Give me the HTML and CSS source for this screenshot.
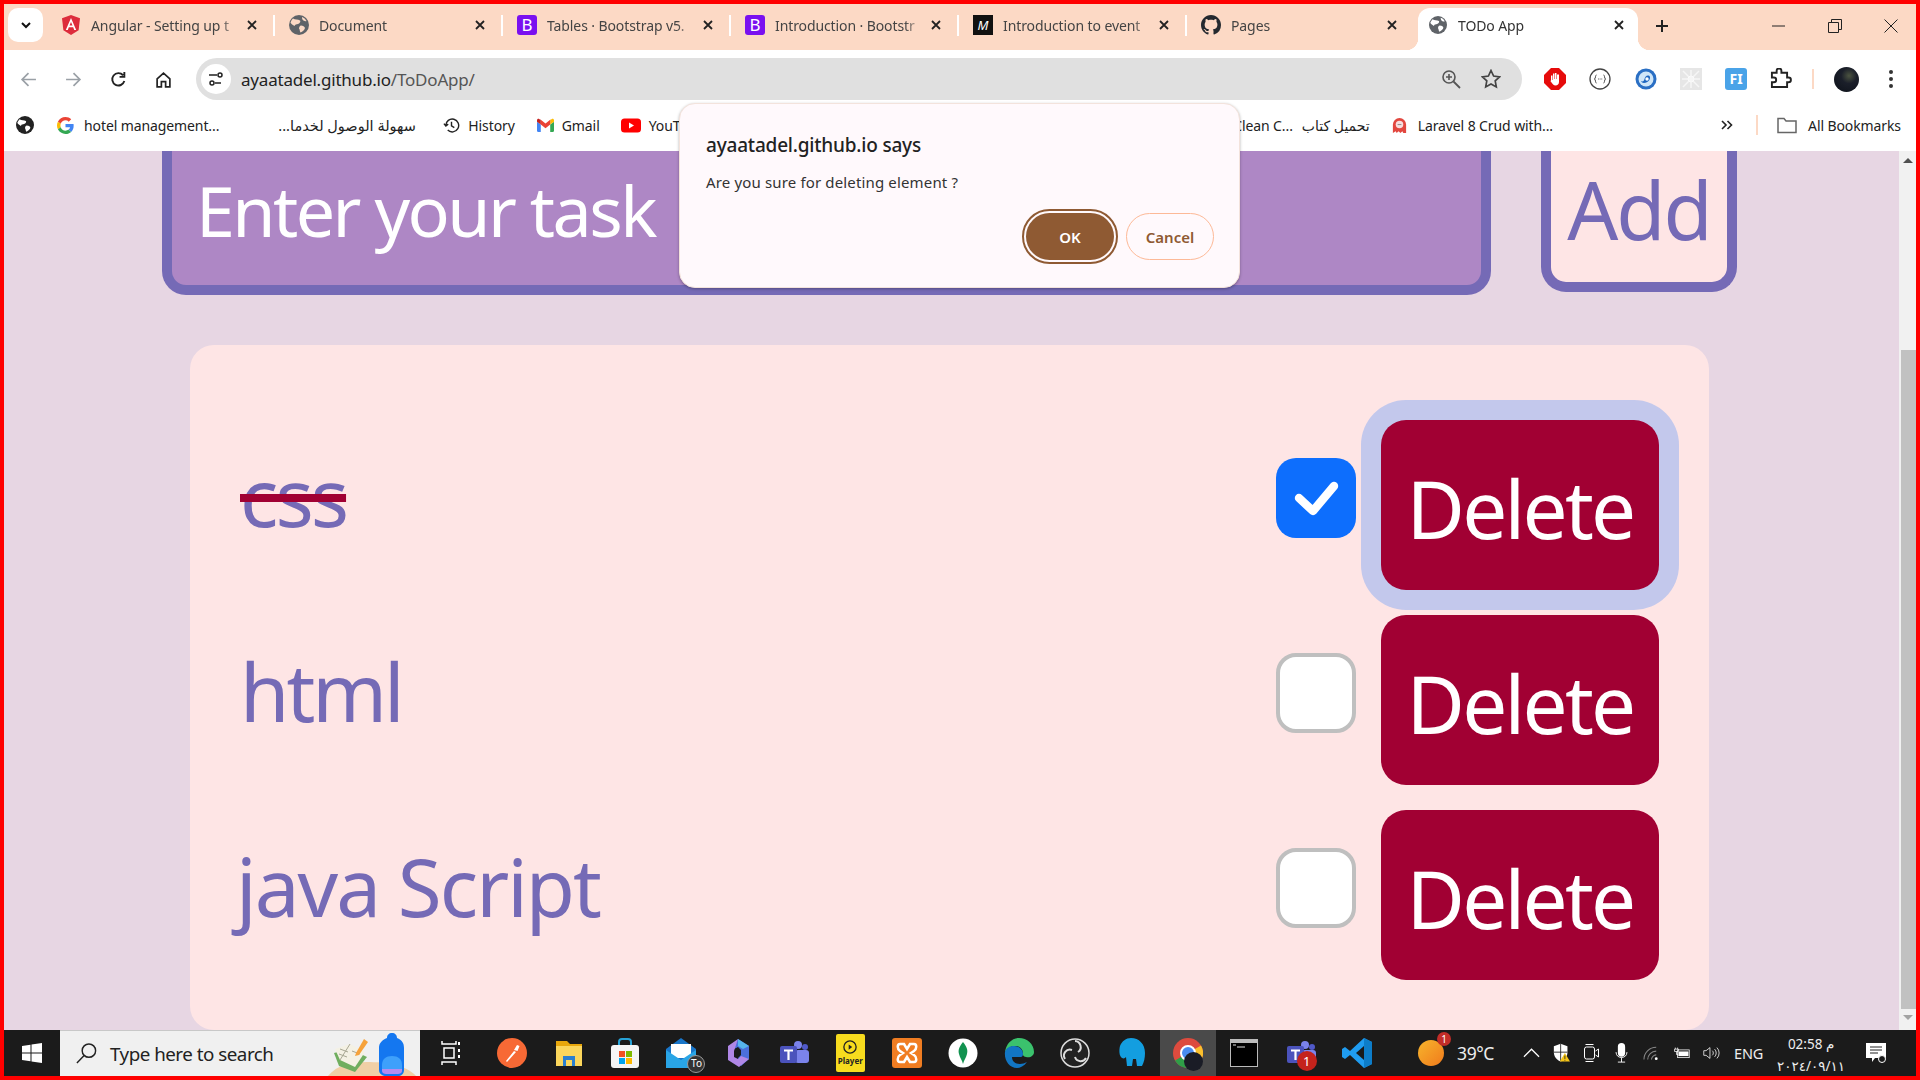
FILE: index.html
```html
<!DOCTYPE html>
<html lang="en">
<head>
    <meta charset="UTF-8">
    <title>TODo App</title>
    <link rel="stylesheet" href="styles.css">
</head>
<body>
<div class="screen">

    <!-- tabs -->
    <div class="tabstrip">
        <button class="tab-search"><svg width="14" height="14" viewBox="0 0 14 14"><path d="M3 5l4 4 4-4" fill="none" stroke="#111" stroke-width="2"/></svg></button>
        <div class="tab">
            <svg class="fav" viewBox="0 0 20 20"><path d="M10 0L1 3.200l1.400 12L10 20l7.600-4.800 1.400-12z" fill="#dd2c3c"/><path d="M10 3L4.800 15h2l1-2.700h4.400l1 2.700h2zM8.500 10.500L10 7l1.500 3.500z" fill="#fff"/></svg>
            <span class="tab-title">Angular - Setting up t</span>
            <svg class="x" viewBox="0 0 12 12"><path d="M2 2l8 8M10 2l-8 8"/></svg>
        </div>
        <i class="tab-sep"></i>
        <div class="tab">
            <svg class="fav" viewBox="0 0 20 20"><circle cx="10" cy="10" r="10" fill="#5f6368"/><path d="M4 3.500C6 5 9 4 11 5.500c1 1-.5 3-2 3.500s-3 0-3.500 2C4 10 2 9 1.500 7.500 2 6 3 4.500 4 3.500zM12 10.500c2 0 3.500 1 4 2.500-.5 2-2.500 3.500-4.500 4.500-1-1.500-.5-3-1.500-4 0-1.500 1-3 2-3zM13 2c2 .7 3.500 2 4.500 4-1 .5-3 0-4-1.500-.5-1-.5-2-.5-2.500z" fill="#fcd9c5"/></svg>
            <span class="tab-title">Document</span>
            <svg class="x" viewBox="0 0 12 12"><path d="M2 2l8 8M10 2l-8 8"/></svg>
        </div>
        <i class="tab-sep"></i>
        <div class="tab">
            <span class="fav fav-b">B</span>
            <span class="tab-title">Tables · Bootstrap v5.</span>
            <svg class="x" viewBox="0 0 12 12"><path d="M2 2l8 8M10 2l-8 8"/></svg>
        </div>
        <i class="tab-sep"></i>
        <div class="tab">
            <span class="fav fav-b">B</span>
            <span class="tab-title">Introduction · Bootstr</span>
            <svg class="x" viewBox="0 0 12 12"><path d="M2 2l8 8M10 2l-8 8"/></svg>
        </div>
        <i class="tab-sep"></i>
        <div class="tab">
            <span class="fav fav-m">M</span>
            <span class="tab-title">Introduction to event</span>
            <svg class="x" viewBox="0 0 12 12"><path d="M2 2l8 8M10 2l-8 8"/></svg>
        </div>
        <i class="tab-sep"></i>
        <div class="tab">
            <svg class="fav" viewBox="0 0 16 16"><path fill="#24292f" d="M8 0C3.580 0 0 3.580 0 8c0 3.540 2.290 6.530 5.470 7.590.4.070.55-.17.55-.38 0-.19-.01-.82-.01-1.490-2.010.37-2.530-.49-2.690-.94-.09-.23-.48-.94-.82-1.130-.28-.15-.68-.52-.01-.53.63-.01 1.080.58 1.230.82.72 1.210 1.870.87 2.330.66.07-.52.28-.87.51-1.070-1.780-.2-3.640-.89-3.640-3.950 0-.87.31-1.590.82-2.150-.08-.2-.36-1.020.08-2.120 0 0 .67-.21 2.200.82.64-.18 1.320-.27 2-.27s1.360.09 2 .27c1.530-1.040 2.200-.82 2.200-.82.44 1.100.16 1.920.08 2.120.51.56.82 1.270.82 2.150 0 3.070-1.870 3.750-3.650 3.950.29.25.54.73.54 1.480 0 1.070-.01 1.930-.01 2.200 0 .21.15.46.55.38A8.010 8.010 0 0 0 16 8c0-4.420-3.580-8-8-8z"/></svg>
            <span class="tab-title">Pages</span>
            <svg class="x" viewBox="0 0 12 12"><path d="M2 2l8 8M10 2l-8 8"/></svg>
        </div>
        <div class="tab tab-active">
            <svg class="fav" viewBox="0 0 20 20"><circle cx="10" cy="10" r="10" fill="#5f6368"/><path d="M4 3.500C6 5 9 4 11 5.500c1 1-.5 3-2 3.500s-3 0-3.500 2C4 10 2 9 1.500 7.500 2 6 3 4.500 4 3.500zM12 10.500c2 0 3.500 1 4 2.500-.5 2-2.500 3.500-4.500 4.500-1-1.500-.5-3-1.500-4 0-1.500 1-3 2-3zM13 2c2 .7 3.500 2 4.500 4-1 .5-3 0-4-1.500-.5-1-.5-2-.5-2.500z" fill="#fff"/></svg>
            <span class="tab-title">TODo App</span>
            <svg class="x" viewBox="0 0 12 12"><path d="M2 2l8 8M10 2l-8 8"/></svg>
        </div>
        <svg class="new-tab" viewBox="0 0 14 14"><path d="M7 1v12M1 7h12" fill="none" stroke="#222" stroke-width="2"/></svg>
        <div class="win-btns">
            <svg viewBox="0 0 14 14" width="14" height="14"><path d="M0 7h13" stroke="#222" fill="none"/></svg>
            <svg viewBox="0 0 14 14" width="14" height="14"><path d="M.5 3.500h10v10H.5zM3.500 3.500v-3h10v10h-3" stroke="#222" fill="none"/></svg>
            <svg viewBox="0 0 14 14" width="14" height="14"><path d="M.5.500l13 13M13.500.500l-13 13" stroke="#222" fill="none"/></svg>
        </div>
    </div>

    <!-- toolbar -->
    <div class="toolbar">
        <div class="nav-btns">
            <svg viewBox="0 0 16 16"><path d="M15 8H2M8 2L2 8l6 6" fill="none" stroke="#9aa0a6" stroke-width="1.600"/></svg>
            <svg viewBox="0 0 16 16"><path d="M1 8h13M8 2l6 6-6 6" fill="none" stroke="#9aa0a6" stroke-width="1.600"/></svg>
            <svg viewBox="0 0 16 16"><path d="M13.500 9.500A5.800 5.800 0 1 1 12.300 4M13.500 1v4.500H9" fill="none" stroke="#222" stroke-width="1.800"/></svg>
            <svg viewBox="0 0 16 16"><path d="M2 7.500L8 2l6 5.500V15h-4v-5H6v5H2z" fill="none" stroke="#222" stroke-width="1.600"/></svg>
        </div>
        <div class="omnibox">
            <span class="site-btn"><svg viewBox="0 0 16 16" width="16" height="16"><path d="M1 4h8M13 12H7" stroke="#222" stroke-width="1.500" fill="none"/><circle cx="12" cy="4" r="2" fill="none" stroke="#222" stroke-width="1.500"/><circle cx="4" cy="12" r="2" fill="none" stroke="#222" stroke-width="1.500"/></svg></span>
            <span class="url">ayaatadel.github.io<span class="url-path">/ToDoApp/</span></span>
            <svg class="omni-icon" viewBox="0 0 20 20"><circle cx="8" cy="8" r="6" fill="none" stroke="#555" stroke-width="1.600"/><path d="M12.500 12.500L19 19" stroke="#555" stroke-width="1.800"/><path d="M8 5v6M5 8h6" stroke="#555" stroke-width="1.600"/></svg>
            <svg class="omni-icon" viewBox="0 0 20 20"><path d="M10 1.500l2.600 5.500 6 .8-4.400 4.100 1.100 6L10 15l-5.300 2.900 1.100-6L1.400 7.800l6-.8z" fill="none" stroke="#444" stroke-width="1.700"/></svg>
        </div>
        <div class="ext-btns">
            <svg viewBox="0 0 22 22"><path d="M7 0h8l7 7v8l-7 7H7l-7-7V7z" fill="#e60b0b"/><path d="M7 13V7.500h1.500V12h.5V5.500h1.500V11h.5V5h1.500v6h.5V6.500H15V14c0 2-1.500 3.500-3.500 3.500S8.500 16 7.500 14.500L6 12.500z" fill="#fff"/></svg>
            <svg viewBox="0 0 22 22"><circle cx="11" cy="11" r="10" fill="#fff" stroke="#444" stroke-width="1.300"/><path d="M7.500 7c-1.500 0-.5 3-2 4 1.500 1 .5 4 2 4M14.500 7c1.500 0 .5 3 2 4-1.500 1-.5 4-2 4" fill="none" stroke="#444"/><path d="M9 11h.8M10.700 11h.8M12.400 11h.8" stroke="#444"/></svg>
            <svg viewBox="0 0 22 22"><circle cx="11" cy="11" r="10.500" fill="#2a6fc4"/><circle cx="11" cy="11" r="7.500" fill="#cfe6f8"/><path d="M6 13c2 1 3 0 3.500-2s2-4 4-3.500c2 .5 2 3 .5 5-1.200 1.600-3 2.500-5 2.500-1.500 0-2.500-1-3-2z" fill="#1d66c0"/><circle cx="12" cy="11" r="1.700" fill="#fff"/></svg>
            <svg viewBox="0 0 22 22"><rect width="22" height="22" fill="#e6e6e6"/><path d="M3 3l16 16M19 3L3 19M11 2v18M2 11h18" stroke="#f6f6f6" stroke-width="1.500"/><circle cx="11" cy="11" r="3" fill="none" stroke="#fbfbfb"/></svg>
            <span class="ext-fi">FI</span>
            <svg viewBox="0 0 22 22"><path d="M2 5h5V3a2.500 2.500 0 0 1 5 0v2h6v5h1.500a2.500 2.500 0 0 1 0 5H18v5H2v-5h2a2.500 2.500 0 0 0 0-5H2z" transform="scale(.95)" fill="none" stroke="#222" stroke-width="2"/></svg>
        </div>
        <i class="bar-sep"></i>
        <span class="avatar"></span>
        <svg class="menu-dots" viewBox="0 0 4 18"><circle cx="2" cy="2" r="2" fill="#333"/><circle cx="2" cy="9" r="2" fill="#333"/><circle cx="2" cy="16" r="2" fill="#333"/></svg>
    </div>

    <!-- bookmarks -->
    <div class="bookmarks">
        <svg class="bm-globe" viewBox="0 0 20 20"><circle cx="10" cy="10" r="10" fill="#222"/><path d="M4 3.500C6 5 9 4 11 5.500c1 1-.5 3-2 3.500s-3 0-3.500 2C4 10 2 9 1.500 7.500 2 6 3 4.500 4 3.500zM12 10.500c2 0 3.500 1 4 2.500-.5 2-2.500 3.500-4.500 4.500-1-1.500-.5-3-1.500-4 0-1.500 1-3 2-3z" fill="#fff"/></svg>
        <div class="bm bm-hotel">
            <svg class="bm-icon" viewBox="0 0 48 48"><path fill="#EA4335" d="M24 9.500c3.500 0 6.700 1.200 9.200 3.600l6.900-6.900C35.900 2.400 30.500 0 24 0 14.600 0 6.500 5.400 2.600 13.200l8 6.200C12.500 13.700 17.800 9.500 24 9.500z"/><path fill="#4285F4" d="M47 24.500c0-1.600-.1-3.100-.4-4.500H24v9h12.900c-.6 3-2.200 5.500-4.700 7.200l7.700 6C44.400 38.100 47 31.900 47 24.500z"/><path fill="#FBBC05" d="M10.500 28.600c-.5-1.400-.8-3-.8-4.600s.3-3.200.8-4.600l-8-6.200C.9 16.500 0 20.100 0 24s.9 7.500 2.600 10.800z"/><path fill="#34A853" d="M24 48c6.500 0 11.900-2.100 15.900-5.800l-7.700-6c-2.200 1.500-4.900 2.300-8.200 2.300-6.300 0-11.500-4.200-13.400-9.900l-8 6.200C6.500 42.600 14.600 48 24 48z"/></svg>
            <span>hotel management...</span>
        </div>
        <div class="bm bm-arabic"><span dir="rtl">سهولة الوصول لخدما...</span></div>
        <div class="bm bm-history">
            <svg class="bm-icon" viewBox="0 0 18 18"><path d="M3 9a6.800 6.800 0 1 1 2 4.800M1 7l2 2.500L5.500 7.500M9 5v4.500l3 1.800" fill="none" stroke="#222" stroke-width="1.500"/></svg>
            <span>History</span>
        </div>
        <div class="bm bm-gmail">
            <svg class="bm-icon" viewBox="0 0 18 14"><path d="M0 3v9.500A1.500 1.500 0 0 0 1.500 14H4V6z" fill="#4285F4"/><path d="M14 14h2.500a1.500 1.500 0 0 0 1.500-1.500V3l-4 3z" fill="#34A853"/><path d="M14 1v5l4-3V1.500C18 .2 16.500-.5 15.500.3z" fill="#FBBC05"/><path d="M4 6V1l5 3.800L14 1v5L9 9.800z" fill="#EA4335"/><path d="M0 1.500V3l4 3V1L2.500.3C1.500-.5 0 .2 0 1.500z" fill="#C5221F"/></svg>
            <span>Gmail</span>
        </div>
        <div class="bm bm-yt">
            <svg class="bm-icon yt-icon" viewBox="0 0 20 14"><rect width="20" height="14" rx="3.500" fill="#f00"/><path d="M8 4l5 3-5 3z" fill="#fff"/></svg>
            <span>YouTube</span>
        </div>
        <div class="bm bm-clean"><span>Clean C...</span> <span dir="rtl">تحميل كتاب</span></div>
        <div class="bm bm-laravel">
            <svg class="bm-icon" viewBox="0 0 16 18"><path d="M1 17V8a7 7 0 0 1 14 0v9h-3l-1-2-2 2-2-2-2 2-1-2z" fill="#e2473f"/><circle cx="8" cy="8" r="4" fill="#f8dede"/><path d="M6 8h4" stroke="#888"/></svg>
            <span>Laravel 8 Crud with...</span>
        </div>
        <svg class="bm-more" viewBox="0 0 12 10"><path d="M1 1l4 4-4 4M6.500 1l4 4-4 4" fill="none" stroke="#222" stroke-width="1.600"/></svg>
        <i class="bar-sep bm-sep"></i>
        <div class="bm bm-all">
            <svg class="bm-icon" viewBox="0 0 20 16"><path d="M1 1h6l2 2.500h10V15H1z" fill="none" stroke="#666" stroke-width="1.500"/></svg>
            <span>All Bookmarks</span>
        </div>
    </div>

    <!-- page -->
    <div class="viewport">
        <main class="page">
            <div class="add-row">
                <div class="task-input">Enter your task</div>
                <button class="add-btn">Add</button>
            </div>
            <div class="task-card">
                <div class="task-row">
                    <span class="task-text task-done">css</span>
                    <span class="check check-on"><svg viewBox="0 0 40 40" width="80" height="80"><path d="M11.500 20l7 6.500L29 14" fill="none" stroke="#fff" stroke-width="4.200" stroke-linecap="round" stroke-linejoin="round"/></svg></span>
                    <button class="del-btn del-focus">Delete</button>
                </div>
                <div class="task-row">
                    <span class="task-text">html</span>
                    <span class="check"></span>
                    <button class="del-btn">Delete</button>
                </div>
                <div class="task-row">
                    <span class="task-text task-long">java Script</span>
                    <span class="check"></span>
                    <button class="del-btn">Delete</button>
                </div>
            </div>
        </main>
        <div class="scrollbar">
            <span class="arrow-up"></span>
            <span class="thumb"></span>
            <span class="arrow-down"></span>
        </div>
    </div>

    <!-- taskbar -->
    <div class="taskbar">
        <div class="start"><svg viewBox="0 0 20 20" width="20" height="20"><path d="M0 3l8.500-1.300v7.800H0zM9.500 1.500L20 0v9.500H9.500zM0 10.500h8.500v7.800L0 17zM9.500 10.500H20V20L9.500 18.500z" fill="#fff"/></svg></div>
        <div class="search">
            <svg viewBox="0 0 24 24" width="23" height="23"><circle cx="14.500" cy="9" r="7" fill="none" stroke="#222" stroke-width="1.500"/><path d="M9.500 14L2 22" stroke="#222" stroke-width="1.500"/></svg>
            <span class="search-text">Type here to search</span>
            <span class="search-art">
                <svg viewBox="0 0 90 46" width="90" height="46"><path d="M0 46c10-12 22-15 40-15s40 3 50 15z" fill="#f0cfa6"/><path d="M7 22l16-4 17 8-12 15-16-6z" fill="#6fae5f"/><path d="M8 18l15-5 15 8-10 15-15-7z" fill="#f4f1e4"/><path d="M23 13L13 29M13 18l8 3M12 23l8 3M25 20l8 3" stroke="#a8a793"/><path d="M29 22l8-14 4 3-9 13-4 1z" fill="#f6a23a"/><path d="M60 7c0-3 2-5 5-5s5 2 5 5c5 2 7 5 7 10v22c0 4-3 6-6 6h-12c-3 0-7-2-7-6V17c0-5 3-8 8-10z" fill="#1477f0"/><path d="M55 34c0-6 4-9 10-9s10 3 10 9v5H55z" fill="#3ea0fb"/><path d="M55 38h20v2c0 2-2 3-4 3H59c-2 0-4-1-4-3z" fill="#b48cf0"/></svg>
            </span>
        </div>
        <div class="task-apps">
            <span class="app app-first"><svg viewBox="0 0 20 26"><path d="M1 1v3h14V1M1 25v-3h14v3M3 8h10v10H3z" fill="none" stroke="#fff" stroke-width="1.500"/><path d="M18 2v3M18 9v3M18 15v3" stroke="#fff" stroke-width="2"/></svg></span>
            <span class="app"><svg viewBox="0 0 30 30"><circle cx="15" cy="15" r="15" fill="#f76935"/><path d="M9 23l8-10 2 1-9 10zM17 12l3-5 2.500 1-2 5z" fill="#fff"/></svg></span>
            <span class="app"><svg viewBox="0 0 30 30"><path d="M2 3h11l3 3h12v5H2z" fill="#e8a70c"/><path d="M2 8h26v20H2z" fill="#fbd65c"/><path d="M9 18h12v10h-3v-6h-6v6H9z" fill="#2a7fcf"/></svg></span>
            <span class="app"><svg viewBox="0 0 30 30"><path d="M9 8V4a3 3 0 0 1 3-3h6a3 3 0 0 1 3 3v4" fill="none" stroke="#27a3d8" stroke-width="2"/><rect x="1" y="7" width="28" height="23" rx="3" fill="#f5f5f5"/><rect x="9" y="13" width="6" height="6" fill="#f25022"/><rect x="16" y="13" width="6" height="6" fill="#7fba00"/><rect x="9" y="20" width="6" height="6" fill="#00a4ef"/><rect x="16" y="20" width="6" height="6" fill="#ffb900"/></svg></span>
            <span class="app app-mail"><svg viewBox="0 0 30 30"><path d="M0 11L15 0l15 11v19H0z" fill="#1976c9"/><path d="M5 6h20v14H5z" fill="#fff"/><path d="M0 12l15 10 15-10v18H0z" fill="#29a5e6"/></svg><span class="mail-badge">To</span></span>
            <span class="app"><svg viewBox="0 0 30 30"><path d="M15 1l11 7v13l-8 7-3-8 3-3v-5l-3-3-6 3z" fill="#4a6fdc"/><path d="M15 1L5 8v14l11 7 10-8-8-3-3 3-4-2v-6z" fill="#b087e6"/><path d="M15 1l11 7-6 3-5-3z" fill="#56b4ec"/></svg></span>
            <span class="app"><svg viewBox="0 0 30 30"><circle cx="19" cy="7" r="4" fill="#7b83eb"/><circle cx="26" cy="9" r="3" fill="#5059c9"/><rect x="16" y="12" width="14" height="13" rx="3" fill="#7b83eb"/><rect x="1" y="8" width="17" height="17" rx="2" fill="#4b53bc"/><path d="M5 11.500h9v2h-3.400V22H8.400v-8.500H5z" fill="#fff"/></svg></span>
            <span class="app"><span class="app-player"><svg viewBox="0 0 16 16"><circle cx="8" cy="8" r="7" fill="none" stroke="#222" stroke-width="1.500"/><path d="M6.500 5l4 3-4 3z" fill="#222"/></svg><b>Player</b></span></span>
            <span class="app"><svg viewBox="0 0 30 30"><rect width="30" height="30" rx="3" fill="#f07d22"/><path d="M8 6h4l3 5 3-5h4c3 0 3 5 0 7l-3 2 3 2c3 2 3 7 0 7h-4l-3-5-3 5H8c-3 0-3-5 0-7l3-2-3-2c-3-2-3-7 0-7z" fill="none" stroke="#fff" stroke-width="2.500"/></svg></span>
            <span class="app"><svg viewBox="0 0 30 30"><circle cx="15" cy="15" r="14.500" fill="#fff"/><path d="M15 4c4 5 5 8 4 12s-3 6-4 10c-1-4-3-6-4-10s0-7 4-12z" fill="#11924f"/></svg></span>
            <span class="app"><svg viewBox="0 0 30 30"><path d="M1 14C2 6 8 0 15 0c8 0 15 6 15 14 0 4-4 6-8 5-3-.6-3-2-3-3 0-5-3-8-8-8-5 0-8 3-10 6z" fill="#3bc26d"/><path d="M1 14c1-4 5-6 9-6 6 0 9 4 9 8 0 2-1 3-2 3H8c0 4 3 7 8 7 2 0 5-1 7-2-3 4-7 6-10 6C5 30 0 22 1 14z" fill="#1276c4"/></svg></span>
            <span class="app"><svg viewBox="0 0 30 30"><circle cx="15" cy="15" r="14" fill="#222" stroke="#ddd" stroke-width="1.500"/><path d="M15 3a6 6 0 0 1 3 11M26 20a6 6 0 0 1-11-1M5 21a6 6 0 0 1 7-9" fill="none" stroke="#ddd" stroke-width="2"/></svg></span>
            <span class="app"><svg viewBox="0 0 30 30"><path d="M14 0c8 0 14 6 14 15 0 5-1 9-3 13h-5l-1-7h-3l-1 7h-5l-1-9c-1 1-2 2-4 1-3-2-3-8-2-12C5 3 9 0 14 0z" fill="#139ee0"/></svg></span>
            <span class="app app-current"><svg viewBox="0 0 30 30"><circle cx="15" cy="15" r="15" fill="#dd4b3e"/><path d="M15 15L2 22.500A15 15 0 0 0 15 30z" fill="#2f9e48"/><path d="M15 15v15A15 15 0 0 0 28 7.500z" fill="#fbc02d"/><circle cx="15" cy="15" r="7" fill="#4a8cf0" stroke="#fff" stroke-width="2"/></svg><span class="chrome-avatar"></span></span>
            <span class="app"><svg viewBox="0 0 28 30"><rect y="1" width="28" height="28" fill="#bbb"/><rect x="1" y="5" width="26" height="23" fill="#000"/><path d="M3 7h3M7 9h8" stroke="#ddd"/></svg></span>
            <span class="app"><svg viewBox="0 0 30 30"><circle cx="19" cy="7" r="4" fill="#7b83eb"/><circle cx="26" cy="9" r="3" fill="#5059c9"/><rect x="16" y="12" width="14" height="13" rx="3" fill="#7b83eb"/><rect x="1" y="8" width="17" height="17" rx="2" fill="#4b53bc"/><path d="M5 11.500h9v2h-3.400V22H8.400v-8.500H5z" fill="#fff"/></svg><span class="teams-badge">1</span></span>
            <span class="app"><svg viewBox="0 0 30 30"><path d="M22 0l8 4v22l-8 4L8 17l-5 4-3-2v-8l3-2 5 4z" fill="#1f9cf0"/><path d="M22 8l-8 7 8 7z" fill="#1a1a1a"/><path d="M22 0l8 4v22l-8 4z" fill="#0d7dc9"/></svg></span>
        </div>
        <div class="tray">
            <span class="weather"><span class="weather-badge">1</span></span>
            <span class="temp">39°C</span>
            <svg class="tray-icon tray-chev" viewBox="0 0 18 10"><path d="M1 9l8-8 8 8" fill="none" stroke="#fff" stroke-width="1.300"/></svg>
            <svg class="tray-icon" viewBox="0 0 20 22"><path d="M9 0l8 3v7c0 6-4 9-8 11-4-2-8-5-8-11V3z" fill="#fff"/><path d="M9 0v21M1 10h16" stroke="#1a1a1a"/><path d="M14 11l6 10H8z" fill="#f5c518"/><path d="M14 14v4M14 19v1" stroke="#222"/></svg>
            <svg class="tray-icon" viewBox="0 0 16 20"><rect x="1" y="4" width="10" height="12" rx="2" fill="none" stroke="#fff"/><path d="M12 8l3-2v8l-3-2M2 1.500h8M2 18.500h8" fill="none" stroke="#fff"/></svg>
            <svg class="tray-icon" viewBox="0 0 14 22"><rect x="3" y="0" width="8" height="15" rx="4" fill="#fff"/><path d="M1 10c0 4 3 6 6 6s6-2 6-6M7 16v5M3 21h8" fill="none" stroke="#fff"/></svg>
            <svg class="tray-icon" viewBox="0 0 18 16"><path d="M1 15A13 13 0 0 1 14 2M5 15a9 9 0 0 1 9-9M9 15a5 5 0 0 1 5-5" fill="none" stroke="#888" stroke-width="1.100"/><circle cx="14" cy="14" r="1.500" fill="#fff"/></svg>
            <svg class="tray-icon" viewBox="0 0 22 14"><path d="M3 0v2M6 0v2M2 2h5v3H2zM4.500 5v4h2" fill="none" stroke="#fff"/><rect x="6" y="3" width="15" height="10" fill="none" stroke="#fff"/><rect x="7" y="5" width="13" height="6" fill="#fff"/></svg>
            <svg class="tray-icon" viewBox="0 0 22 16"><path d="M1 5h3l5-4v14l-5-4H1z" fill="none" stroke="#fff"/><path d="M12 5a4 4 0 0 1 0 6M15 3a7 7 0 0 1 0 10M18 1a10 10 0 0 1 0 14" fill="none" stroke="#fff"/></svg>
            <span class="lang">ENG</span>
            <div class="clock">
                <span>02:58 م</span>
                <span class="clock-date">٢٠٢٤/٠٩/١١</span>
            </div>
            <svg class="notif" viewBox="0 0 22 22"><path d="M1 1h20v15H10l-3 4v-4H1z" fill="#fff"/><path d="M5 5h12M5 8h12M5 11h8" stroke="#222"/><circle cx="17" cy="17" r="3.500" fill="#1a1a1a" stroke="#fff"/></svg>
        </div>
    </div>

    <!-- confirm dialog -->
    <div class="dialog">
        <h2 class="dialog-title">ayaatadel.github.io says</h2>
        <p class="dialog-msg">Are you sure for deleting element ?</p>
        <div class="dialog-btns">
            <button class="btn-ok">OK</button>
            <button class="btn-cancel">Cancel</button>
        </div>
    </div>
</div>
</body>
</html>
```

FILE: styles.css
```css
:root {
    --strip: #fcd9c5;
    --purple: #756ab6;
    --lilac: #ae87c5;
    --page-bg: #e7d6e3;
    --card-bg: #fee5e5;
    --crimson: #a10033;
    --brown: #8f5a33;
}
* {
    box-sizing: border-box;
}
html, body {
    margin: 0;
    height: 100%;
    overflow: hidden;
}
body {
    font-family: "Noto Sans", "DejaVu Sans", sans-serif;
    color: #222;
}
button {
    font-family: inherit;
    cursor: pointer;
}
.screen {
    position: relative;
    width: 1920px;
    height: 1080px;
    display: flex;
    flex-direction: column;
    border: 4px solid #f00;
    background: #fff;
}

/* tabs */
.tabstrip {
    height: 46px;
    flex: none;
    background: var(--strip);
    display: flex;
    align-items: flex-end;
    padding-left: 4px;
}
.tab-search {
    width: 35px;
    height: 34px;
    margin: 0 4px 8px 0;
    padding: 0;
    border: 0;
    border-radius: 10px;
    background: #fff;
    display: flex;
    align-items: center;
    justify-content: center;
}
.tab {
    position: relative;
    width: 227px;
    height: 42px;
    flex: none;
    display: flex;
    align-items: center;
    padding: 0 16px 8px 14px;
    font-size: 14px;
    letter-spacing: -0.1px;
    color: #444;
}
.tab-sep {
    width: 2px;
    height: 21px;
    margin-bottom: 14px;
    margin-left: -1px;
    flex: none;
    background: #fff;
}
.tab-active {
    width: 220px;
    margin-left: 4px;
    padding: 0 13px 8px 11px;
    background: #fff;
    border-radius: 12px 12px 0 0;
    color: #333;
}
.tab-active::before,
.tab-active::after {
    content: "";
    position: absolute;
    bottom: 0;
    width: 12px;
    height: 12px;
}
.tab-active::before {
    left: -12px;
    background: radial-gradient(circle at 0 0, var(--strip) 12px, #fff 12.500px);
}
.tab-active::after {
    right: -12px;
    background: radial-gradient(circle at 100% 0, var(--strip) 12px, #fff 12.500px);
}
.fav {
    width: 20px;
    height: 20px;
    flex: none;
    margin-right: 10px;
}
.tab-active .fav {
    width: 18px;
    height: 18px;
    margin-right: 11px;
}
.fav-b {
    background: #7a10f0;
    color: #fff;
    border-radius: 3px;
    font-size: 17px;
    line-height: 20px;
    text-align: center;
}
.fav-m {
    background: #111;
    color: #fff;
    font-size: 13px;
    font-style: italic;
    line-height: 20px;
    text-align: center;
}
.tab-title {
    flex: 1;
    white-space: nowrap;
    margin-right: 4px;
    -webkit-mask-image: linear-gradient(90deg, #000 86%, transparent 98%);
    mask-image: linear-gradient(90deg, #000 86%, transparent 98%);
}
.x {
    width: 12px;
    height: 12px;
    flex: none;
    fill: none;
    stroke: #222;
    stroke-width: 1.800;
}
.new-tab {
    width: 14px;
    height: 14px;
    margin: 0 0 17px 17px;
    flex: none;
}
.win-btns {
    display: flex;
    gap: 42px;
    margin: 0 0 17px auto;
    padding-right: 18px;
}

/* toolbar */
.toolbar {
    height: 51px;
    flex: none;
    display: flex;
    align-items: center;
    padding: 7px 16px 0 0;
}
.nav-btns {
    display: flex;
    gap: 28px;
    padding-left: 16px;
    width: 192px;
}
.nav-btns svg {
    width: 17px;
    height: 17px;
}
.omnibox {
    width: 1326px;
    height: 42px;
    border-radius: 21px;
    background: #e0e0e0;
    display: flex;
    align-items: center;
    padding: 0 21px 0 5px;
}
.site-btn {
    width: 30px;
    height: 30px;
    border-radius: 50%;
    background: #fff;
    display: flex;
    align-items: center;
    justify-content: center;
    margin-right: 10px;
}
.url {
    flex: 1;
    font-size: 17px;
    letter-spacing: -0.2px;
    color: #222;
}
.url-path {
    color: #555;
}
.omni-icon {
    width: 20px;
    height: 20px;
    margin-left: 20px;
}
.ext-btns {
    display: flex;
    align-items: center;
    gap: 23.300px;
    margin-left: 22px;
}
.ext-btns svg {
    width: 22px;
    height: 22px;
}
.ext-fi {
    width: 22px;
    height: 22px;
    background: #4aa3e8;
    color: #fff;
    border-radius: 3px;
    font-size: 14px;
    font-weight: 700;
    line-height: 22px;
    text-align: center;
}
.bar-sep {
    width: 2px;
    height: 20px;
    margin-left: 20px;
    background: var(--strip);
}
.avatar {
    width: 25px;
    height: 25px;
    margin-left: 20px;
    border-radius: 50%;
    background: radial-gradient(circle at 60% 35%, #4b5340 0, #1b1f2a 35%, #0c1018 100%);
}
.menu-dots {
    width: 4px;
    height: 18px;
    margin-left: 30px;
}

/* bookmarks */
.bookmarks {
    height: 50px;
    flex: none;
    display: flex;
    align-items: center;
    font-size: 14px;
    letter-spacing: -0.1px;
    color: #222;
    white-space: nowrap;
    padding: 0 0 2px 12px;
}
.bm-globe {
    width: 18px;
    height: 18px;
    flex: none;
}
.bm {
    display: flex;
    align-items: center;
    gap: 8px;
    flex: none;
}
.bm-icon {
    width: 17px;
    height: 17px;
    flex: none;
}
.bm-hotel {
    margin-left: 23px;
    gap: 10px;
}
.bm-arabic {
    margin-left: 59px;
    width: 141px;
    font-size: 14.500px;
}
.bm-history {
    margin-left: 24px;
}
.bm-gmail {
    margin-left: 22px;
}
.bm-yt {
    margin-left: 21px;
    width: 100px;
    overflow: hidden;
}
.yt-icon {
    width: 20px;
}
.bm-clean {
    margin-left: 499px;
    width: 150px;
    gap: 9px;
    justify-content: flex-end;
}
.bm-laravel {
    margin-left: 21px;
    gap: 10px;
}
.bm-more {
    width: 12px;
    height: 10px;
    margin-left: 168px;
    flex: none;
}
.bm-sep {
    height: 20px;
    margin-left: 23px;
}
.bm-all {
    margin-left: 19px;
    gap: 11px;
}
.bm-all .bm-icon {
    width: 20px;
}

/* page */
.viewport {
    flex: 1;
    min-height: 0;
    display: flex;
    background: var(--page-bg);
}
.page {
    flex: 1;
    min-width: 0;
    overflow: hidden;
}
.add-row {
    display: flex;
    align-items: flex-start;
    padding-left: 158px;
}
.task-input {
    width: 1329px;
    height: 144px;
    border: 10px solid var(--purple);
    border-top: 0;
    border-radius: 0 0 24px 24px;
    background: var(--lilac);
    color: #fff;
    padding-left: 24px;
    font-size: 70px;
    line-height: 118px;
    letter-spacing: -2.600px;
    white-space: nowrap;
}
.add-btn {
    width: 196px;
    height: 141px;
    margin-left: 50px;
    padding: 0 0 16px;
    border: 10px solid var(--purple);
    border-top: 0;
    border-radius: 0 0 25px 25px;
    background: var(--card-bg);
    color: var(--purple);
    font-size: 80px;
    line-height: 112px;
    letter-spacing: -2px;
}
.task-card {
    width: 1519px;
    height: 685px;
    margin: 50px 0 0 186px;
    padding: 75px 50px 0;
    border-radius: 24px;
    background: var(--card-bg);
    display: flex;
    flex-direction: column;
    gap: 25px;
}
.task-row {
    display: flex;
    align-items: center;
    height: 170px;
}
.task-text {
    flex: 1;
    color: var(--purple);
    font-size: 80px;
    letter-spacing: -3px;
    line-height: 110px;
    margin-bottom: 19px;
}
.task-long {
    letter-spacing: -2px;
    margin-left: -4px;
}
.task-done {
    text-decoration: line-through;
    text-decoration-color: var(--crimson);
    text-decoration-thickness: 8px;
}
.check {
    width: 80px;
    height: 80px;
    margin: 0 25px 14px 0;
    flex: none;
    border: 4px solid #bfbfbf;
    border-radius: 20px;
    background: #fff;
}
.check-on {
    border: 0;
    background: #0d6efd;
}
.del-btn {
    width: 278px;
    height: 170px;
    flex: none;
    padding: 6px 0 0;
    border: 0;
    border-radius: 25px;
    background: var(--crimson);
    color: #fff;
    font-size: 80px;
    line-height: 1;
    letter-spacing: -2.700px;
}
.del-focus {
    box-shadow: 0 0 0 20px #c3c8ec;
}
.scrollbar {
    width: 17px;
    flex: none;
    background: #f1f1f1;
    display: flex;
    flex-direction: column;
    align-items: flex-end;
}
.arrow-up,
.arrow-down {
    width: 0;
    height: 0;
    flex: none;
    border-left: 5px solid transparent;
    border-right: 5px solid transparent;
    margin-right: 3px;
}
.arrow-up {
    border-bottom: 5px solid #505050;
    margin-top: 7px;
}
.arrow-down {
    border-top: 5px solid #a3a3a3;
    margin-top: 6px;
}
.thumb {
    width: 15px;
    height: 659px;
    flex: none;
    margin-top: 187px;
    background: #c1c1c1;
}

/* taskbar */
.taskbar {
    height: 46px;
    flex: none;
    display: flex;
    align-items: center;
    background: #1b1b1b;
    color: #fff;
}
.start {
    width: 56px;
    display: flex;
    justify-content: center;
}
.search {
    width: 360px;
    height: 46px;
    display: flex;
    align-items: center;
    background: #f0f0f0;
    border-top: 1px solid #c8c8c8;
    color: #222;
    padding-left: 15px;
    overflow: hidden;
}
.search-text {
    margin-left: 12px;
    font-size: 18.800px;
    letter-spacing: -0.5px;
    white-space: nowrap;
}
.search-art {
    margin-left: 54px;
    height: 46px;
    flex: none;
}
.task-apps {
    display: flex;
    align-items: center;
    height: 46px;
    padding-left: 3px;
}
.app {
    position: relative;
    width: 56.300px;
    height: 46px;
    flex: none;
    display: flex;
    align-items: center;
    justify-content: center;
}
.app svg {
    width: 30px;
    height: 30px;
}
.app-first {
    width: 61.300px;
    padding-right: 5px;
}
.app-first svg {
    width: 20px;
    height: 26px;
}
.app-current {
    background: #4a4a4a;
}
.mail-badge {
    position: absolute;
    right: 4px;
    bottom: 3px;
    width: 18px;
    height: 18px;
    border-radius: 50%;
    background: #333;
    border: 1px solid #999;
    font-size: 10px;
    line-height: 15px;
    text-align: center;
}
.chrome-avatar {
    position: absolute;
    right: 13px;
    bottom: 5px;
    width: 19px;
    height: 19px;
    border-radius: 50%;
    background: #1a1c26;
}
.teams-badge {
    position: absolute;
    right: 12px;
    bottom: 5px;
    width: 20px;
    height: 20px;
    border-radius: 50%;
    background: #c4231c;
    font-size: 13px;
    line-height: 20px;
    text-align: center;
}
.app-player {
    width: 29px;
    height: 38px;
    background: #f7dc1e;
    border-radius: 2px;
    color: #222;
    font-size: 8px;
    display: flex;
    flex-direction: column;
    align-items: center;
    justify-content: center;
    gap: 1px;
}
.app-player svg {
    width: 14px;
    height: 14px;
}
.tray {
    flex: 1;
    display: flex;
    align-items: center;
    height: 46px;
    padding-left: 33px;
    font-size: 15px;
    white-space: nowrap;
}
.weather {
    position: relative;
    width: 26px;
    height: 26px;
    flex: none;
    border-radius: 50%;
    background: linear-gradient(135deg, #f7b52c, #f07a1c);
}
.weather-badge {
    position: absolute;
    right: -7px;
    top: -8px;
    width: 14px;
    height: 14px;
    border-radius: 50%;
    background: #c22d28;
    font-size: 10px;
    line-height: 14px;
    text-align: center;
}
.temp {
    margin-left: 13px;
    font-size: 17.500px;
    letter-spacing: -0.4px;
    color: #eee;
}
.tray-icon {
    width: 17px;
    height: 20px;
    margin-left: 13px;
    flex: none;
}
.tray-chev {
    margin-left: 29px;
    height: 12px;
}
.lang {
    margin-left: 14px;
    font-size: 14.500px;
    letter-spacing: -0.2px;
    color: #eee;
}
.clock {
    margin-left: 17px;
    width: 62px;
    display: flex;
    flex-direction: column;
    align-items: center;
    padding-top: 4px;
    font-size: 13.500px;
    line-height: 22px;
    letter-spacing: -0.2px;
    color: #eee;
}
.clock-date {
    letter-spacing: -0.7px;
}
.notif {
    width: 22px;
    height: 22px;
    margin-left: 23px;
    flex: none;
}

/* confirm dialog */
.dialog {
    position: absolute;
    left: 675px;
    top: 99px;
    width: 561px;
    height: 185px;
    padding: 29px 26px 0;
    background: #fff9fc;
    border: 1px solid #f3e3dc;
    border-radius: 16px;
    box-shadow: 0 1px 3px rgba(0, 0, 0, 0.3);
    display: flex;
    flex-direction: column;
}
.dialog-title {
    margin: 0;
    font-size: 19px;
    font-weight: 500;
    line-height: 24px;
    letter-spacing: -0.2px;
    color: #222;
}
.dialog-msg {
    margin: 14px 0 0;
    font-size: 15px;
    line-height: 22px;
    letter-spacing: 0.15px;
    color: #333;
}
.dialog-btns {
    display: flex;
    justify-content: flex-end;
    align-items: center;
    gap: 7px;
    margin: 20px -1px 0 0;
}
.btn-ok,
.btn-cancel {
    height: 47px;
    border-radius: 24px;
    font-size: 15px;
    font-weight: 600;
    padding: 0;
}
.btn-ok {
    width: 88px;
    border: 0;
    background: var(--brown);
    color: #fff;
    margin-right: 5px;
    outline: 2px solid var(--brown);
    outline-offset: 2px;
}
.btn-cancel {
    width: 88px;
    border: 1px solid #fdb997;
    background: #fff9fc;
    color: var(--brown);
}
```
